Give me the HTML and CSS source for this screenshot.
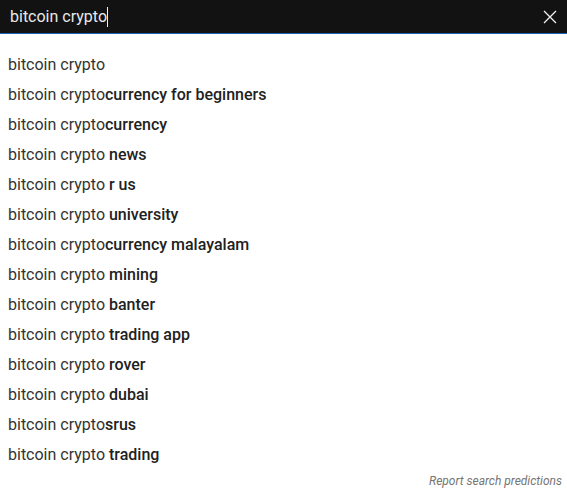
FILE: index.html
```html
<!DOCTYPE html>
<html>
<head>
<meta charset="utf-8">
<link rel="stylesheet" href="styles.css">
</head>
<body>
<div class="search-bar">
  <div class="query">bitcoin crypto<span class="caret"></span></div>
  <svg class="close" width="14" height="14" viewBox="0 0 14 14"><path d="M1 1L13 13M13 1L1 13" stroke="#f1f1f1" stroke-width="1.3" fill="none"/></svg>
</div>
<ul class="suggestions">
  <li>bitcoin crypto</li>
  <li>bitcoin crypto<b>currency for beginners</b></li>
  <li>bitcoin crypto<b>currency</b></li>
  <li>bitcoin crypto <b>news</b></li>
  <li>bitcoin crypto <b>r us</b></li>
  <li>bitcoin crypto <b>university</b></li>
  <li>bitcoin crypto<b>currency malayalam</b></li>
  <li>bitcoin crypto <b>mining</b></li>
  <li>bitcoin crypto <b>banter</b></li>
  <li>bitcoin crypto <b>trading app</b></li>
  <li>bitcoin crypto <b>rover</b></li>
  <li>bitcoin crypto <b>dubai</b></li>
  <li>bitcoin crypto<b>srus</b></li>
  <li>bitcoin crypto <b>trading</b></li>
</ul>
<div class="report">Report search predictions</div>
</body>
</html>
```
FILE: styles.css
```css
html, body {
  margin: 0;
  padding: 0;
  background: #fff;
  font-family: Roboto, "Liberation Sans", sans-serif;
}
.search-bar {
  height: 33px;
  background: #121212;
  border-bottom: 1px solid #1c62b9;
  display: flex;
  align-items: center;
  justify-content: space-between;
  padding: 0 10px 0 10px;
}
.query {
  color: #e8e8e8;
  font-size: 16px;
  display: flex;
  align-items: center;
}
.caret {
  display: inline-block;
  width: 1px;
  height: 20px;
  background: #f1f1f1;
}
.suggestions {
  list-style: none;
  margin: 0;
  padding: 16px 0 0 0;
}
.suggestions li {
  height: 30px;
  line-height: 30px;
  padding-left: 8px;
  font-size: 16px;
  color: #333;
}
.suggestions b {
  font-weight: 500;
  color: #212121;
}
.report {
  text-align: right;
  font-size: 12px;
  font-style: italic;
  color: #757575;
  padding-right: 5px;
  line-height: 22px;
}
```
